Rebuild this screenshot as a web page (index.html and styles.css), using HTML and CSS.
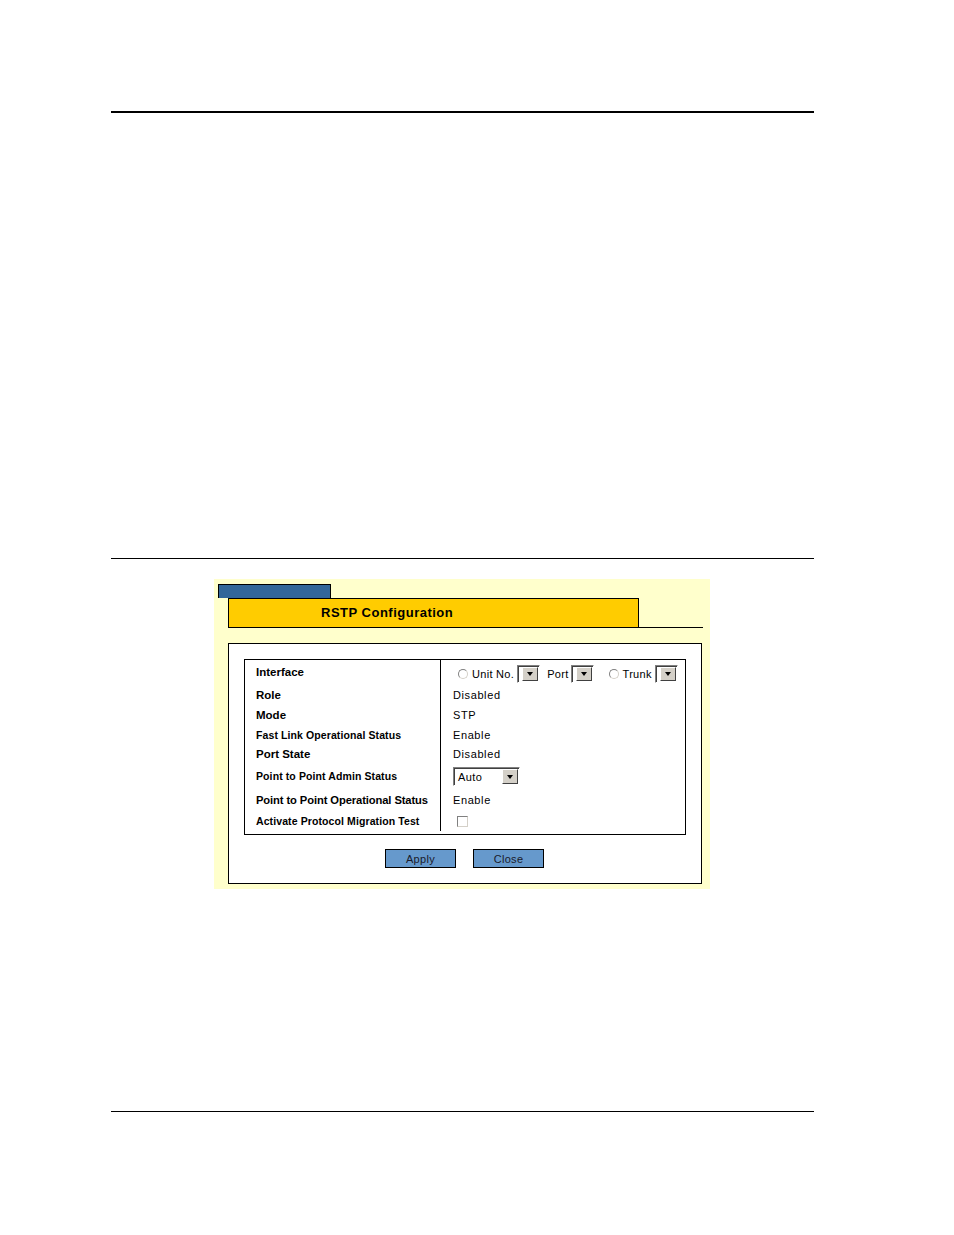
FILE: index.html
```html
<!DOCTYPE html>
<html>
<head>
<meta charset="utf-8">
<link rel="stylesheet" href="styles.css">
</head>
<body>
<div class="page">
  <div class="rule rule-top"></div>
  <div class="rule rule-mid"></div>
  <div class="figure">
    <div class="panel">
      <div class="tab"></div>
      <div class="header">
        <div class="title">RSTP Configuration</div>
        <div class="header-fill"></div>
      </div>
      <div class="box">
        <div class="table">
          <div class="lbl r1">Interface</div>
          <div class="val r1">
            <span class="radio"></span><span class="opt">Unit No.</span><span class="dd"><span class="dd-btn"><span class="tri"></span></span></span>
            <span class="opt port">Port</span><span class="dd"><span class="dd-btn"><span class="tri"></span></span></span>
            <span class="radio trunk-radio"></span><span class="opt">Trunk</span><span class="dd"><span class="dd-btn"><span class="tri"></span></span></span>
          </div>
          <div class="lbl big">Role</div>
          <div class="val">Disabled</div>
          <div class="lbl big">Mode</div>
          <div class="val">STP</div>
          <div class="lbl small">Fast Link Operational Status</div>
          <div class="val">Enable</div>
          <div class="lbl big">Port State</div>
          <div class="val">Disabled</div>
          <div class="lbl small">Point to Point Admin Status</div>
          <div class="val"><span class="sel"><span class="sel-text">Auto</span><span class="dd-btn"><span class="tri"></span></span></span></div>
          <div class="lbl mid">Point to Point Operational Status</div>
          <div class="val">Enable</div>
          <div class="lbl small">Activate Protocol Migration Test</div>
          <div class="val"><span class="check"></span></div>
        </div>
        <div class="buttons">
          <div class="btn">Apply</div>
          <div class="btn">Close</div>
        </div>
      </div>
    </div>
  </div>
  <div class="rule rule-bottom"></div>
</div>
</body>
</html>
```

FILE: styles.css
```css
html, body {
  margin: 0;
  padding: 0;
  background: #ffffff;
}
body {
  font-family: "Liberation Sans", Arial, sans-serif;
  color: #000;
}
.page {
  width: 954px;
  height: 1235px;
  position: relative;
  overflow: hidden;
}
.rule {
  margin-left: 111px;
  width: 703px;
  background: #000;
}
.rule-top {
  margin-top: 111px;
  height: 2px;
}
.rule-mid {
  margin-top: 445px;
  height: 1px;
}
.figure {
  margin-top: 20px;
  margin-left: 214px;
}
.panel {
  width: 496px;
  height: 310px;
  background: #ffffcc;
  box-sizing: border-box;
  padding-top: 5px;
}
.tab {
  margin-left: 4px;
  width: 113px;
  height: 14px;
  box-sizing: border-box;
  background: #336699;
  border: 1px solid #000;
  border-bottom: none;
}
.header {
  display: flex;
  margin-left: 14px;
  align-items: flex-end;
}
.title {
  width: 411px;
  height: 30px;
  box-sizing: border-box;
  background: #ffcc00;
  border: 1px solid #000;
  font-weight: bold;
  font-size: 13px;
  letter-spacing: 0.5px;
  display: flex;
  align-items: center;
  justify-content: flex-start;
  padding-left: 92px;
  padding-bottom: 1px;
}
.header-fill {
  width: 64px;
  height: 1px;
  background: #000;
}
.box {
  margin-top: 15px;
  margin-left: 14px;
  width: 474px;
  height: 241px;
  box-sizing: border-box;
  background: #fff;
  border: 1px solid #000;
  padding: 15px 0 0 15px;
}
.table {
  width: 442px;
  box-sizing: border-box;
  border: 1px solid #000;
  display: grid;
  grid-template-columns: 196px 1fr;
  grid-template-rows: 24px 21px 20px 19px 19px 26px 21px 21px;
  padding-bottom: 3px;
}
.lbl {
  border-right: 1px solid #000;
  padding-left: 11px;
  font-weight: bold;
  font-size: 11px;
  display: flex;
  align-items: center;
  white-space: nowrap;
}
.lbl.big {
  font-size: 11.5px;
}
.lbl.mid {
  font-size: 11.2px;
  letter-spacing: -0.1px;
}
.lbl.small {
  font-size: 10.5px;
  letter-spacing: 0.1px;
}
.lbl.r1 {
  font-size: 11.5px;
  padding-bottom: 0;
}
.val {
  padding-left: 12px;
  font-size: 11px;
  letter-spacing: 0.6px;
  display: flex;
  align-items: center;
  white-space: nowrap;
}
.val.r1 {
  padding-left: 17px;
  padding-top: 3px;
  letter-spacing: 0.3px;
}
.radio {
  width: 10px;
  height: 10px;
  box-sizing: border-box;
  border-radius: 50%;
  border: 1px solid #808080;
  border-right-color: #d4d0c8;
  border-bottom-color: #d4d0c8;
  background: #fff;
  flex: none;
  margin-right: 4px;
}
.trunk-radio {
  margin-left: 15px;
}
.opt {
  margin-right: 3px;
}
.port {
  margin-left: 7px;
  margin-right: 2px;
}
.dd {
  width: 23px;
  height: 18px;
  box-sizing: border-box;
  border: 1px solid #808080;
  border-right-color: #fff;
  border-bottom-color: #fff;
  background: #fff;
  display: flex;
  justify-content: flex-end;
  padding: 1px;
  flex: none;
  box-shadow: inset 1px 1px 0 #404040;
}
.dd-btn {
  width: 16px;
  height: 14px;
  box-sizing: border-box;
  background: #d4d0c8;
  border: 1px solid #fff;
  border-right-color: #404040;
  border-bottom-color: #404040;
  display: flex;
  align-items: center;
  justify-content: center;
  flex: none;
}
.tri {
  width: 0;
  height: 0;
  border-left: 3.5px solid transparent;
  border-right: 3.5px solid transparent;
  border-top: 4px solid #000;
  margin-top: 1px;
}
.sel {
  width: 67px;
  height: 19px;
  box-sizing: border-box;
  border: 1px solid #808080;
  border-right-color: #fff;
  border-bottom-color: #fff;
  box-shadow: inset 1px 1px 0 #404040;
  background: #fff;
  display: flex;
  align-items: center;
  padding: 1px;
  margin-top: 1px;
}
.sel-text {
  flex: 1;
  padding-left: 3px;
  letter-spacing: 0.4px;
}
.sel .dd-btn {
  height: 15px;
}
.check {
  width: 11px;
  height: 11px;
  box-sizing: border-box;
  border: 1px solid #808080;
  border-right-color: #d4d0c8;
  border-bottom-color: #d4d0c8;
  background: #fff;
  margin-left: 4px;
  margin-top: 2px;
}
.buttons {
  display: flex;
  justify-content: center;
  gap: 17px;
  margin-top: 14px;
  margin-left: -16px;
}
.btn {
  width: 71px;
  height: 19px;
  box-sizing: border-box;
  background: #6699cc;
  border: 1px solid #000;
  font-size: 11px;
  color: #1a1a2a;
  letter-spacing: 0.3px;
  display: flex;
  align-items: center;
  justify-content: center;
}
.rule-bottom {
  margin-top: 222px;
  height: 1px;
}
```
